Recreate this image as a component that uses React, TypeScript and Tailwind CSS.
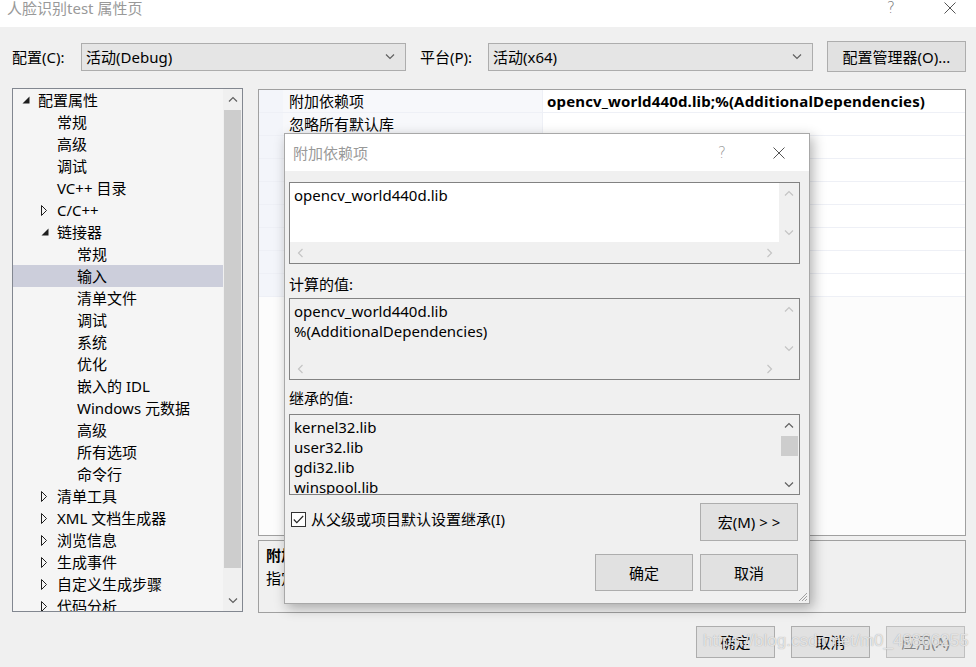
import React from 'react';

type Dir = 'up' | 'down' | 'left' | 'right';

const chevPaths: Record<Dir, string> = {
  up: 'M1 5.5 L5 1.5 L9 5.5',
  down: 'M1 1.5 L5 5.5 L9 1.5',
  left: 'M5.5 1 L1.5 5 L5.5 9',
  right: 'M1.5 1 L5.5 5 L1.5 9',
};

function Chevron({ dir, className }: { dir: Dir; className: string }) {
  const vertical = dir === 'up' || dir === 'down';
  return (
    <svg
      width={vertical ? 10 : 7}
      height={vertical ? 7 : 10}
      viewBox={vertical ? '0 0 10 7' : '0 0 7 10'}
      fill="none"
      strokeWidth="1.2"
      className={className}
    >
      <path d={chevPaths[dir]} />
    </svg>
  );
}

function CloseIcon() {
  return (
    <svg width="12" height="12" viewBox="0 0 12 12" stroke="#555" strokeWidth="1">
      <path d="M0.5 0.5 L11.5 11.5 M11.5 0.5 L0.5 11.5" />
    </svg>
  );
}

function Expanded() {
  return (
    <svg width="8" height="8" viewBox="0 0 8 8">
      <path d="M7.5 0.5 L7.5 7.5 L0.5 7.5 Z" fill="#1e1e1e" />
    </svg>
  );
}

function Collapsed() {
  return (
    <svg width="6" height="11" viewBox="0 0 6 11">
      <path d="M0.5 0.5 L5.5 5.5 L0.5 10.5 Z" fill="none" stroke="#1e1e1e" />
    </svg>
  );
}

interface TreeItem {
  label: string;
  level: 0 | 1 | 2;
  state?: 'open' | 'closed';
  selected?: boolean;
}

const tree: TreeItem[] = [
  { label: '配置属性', level: 0, state: 'open' },
  { label: '常规', level: 1 },
  { label: '高级', level: 1 },
  { label: '调试', level: 1 },
  { label: 'VC++ 目录', level: 1 },
  { label: 'C/C++', level: 1, state: 'closed' },
  { label: '链接器', level: 1, state: 'open' },
  { label: '常规', level: 2 },
  { label: '输入', level: 2, selected: true },
  { label: '清单文件', level: 2 },
  { label: '调试', level: 2 },
  { label: '系统', level: 2 },
  { label: '优化', level: 2 },
  { label: '嵌入的 IDL', level: 2 },
  { label: 'Windows 元数据', level: 2 },
  { label: '高级', level: 2 },
  { label: '所有选项', level: 2 },
  { label: '命令行', level: 2 },
  { label: '清单工具', level: 1, state: 'closed' },
  { label: 'XML 文档生成器', level: 1, state: 'closed' },
  { label: '浏览信息', level: 1, state: 'closed' },
  { label: '生成事件', level: 1, state: 'closed' },
  { label: '自定义生成步骤', level: 1, state: 'closed' },
  { label: '代码分析', level: 1, state: 'closed' },
];

const indent = ['pl-[9px]', 'pl-[28px]', 'pl-[48px]'];

// rows below the second one sit under the dialog, so only their lines show
const gridRows = [
  { name: '附加依赖项', value: 'opencv_world440d.lib;%(AdditionalDependencies)' },
  { name: '忽略所有默认库', value: '' },
  { name: '', value: '' },
  { name: '', value: '' },
  { name: '', value: '' },
  { name: '', value: '' },
  { name: '', value: '' },
  { name: '', value: '' },
  { name: '', value: '' },
];

function Dropdown({ text }: { text: string }) {
  return (
    <div className="w-[325px] h-[28px] bg-[#e5e5e5] border border-[#adadad] flex items-center pl-[4px] pr-[10px]">
      <span className="flex-1">{text}</span>
      <Chevron dir="down" className="stroke-[#606060]" />
    </div>
  );
}

function Button({ children, className }: { children: React.ReactNode; className: string }) {
  return (
    <div className={`bg-[#e1e1e1] border border-[#adadad] flex items-center justify-center ${className}`}>
      {children}
    </div>
  );
}

function ScrollBox({
  lines,
  white,
  hscroll,
  active,
  className,
}: {
  lines: string[];
  white?: boolean;
  hscroll?: boolean;
  active?: boolean;
  className: string;
}) {
  const arrow = active ? 'stroke-[#606060]' : 'stroke-[#c4c4c4]';
  return (
    <div className={`border border-[#828282] flex flex-col overflow-hidden ${white ? 'bg-white' : 'bg-[#f0f0f0]'} ${className}`}>
      <div className="flex flex-1 min-h-0">
        <div className="flex-1 pl-[4px] pt-[2px] leading-[20px] overflow-hidden">
          {lines.map((l, i) => (
            <div key={i} className="h-[20px]">{l}</div>
          ))}
        </div>
        <div className="w-[20px] bg-[#f0f0f0] flex flex-col items-center">
          <div className="h-[20px] flex items-center justify-center">
            <Chevron dir="up" className={arrow} />
          </div>
          {active ? <div className="w-[17px] h-[20px] bg-[#cdcdcd] mt-[1px]" /> : null}
          <div className="flex-1" />
          <div className="h-[20px] flex items-center justify-center">
            <Chevron dir="down" className={arrow} />
          </div>
        </div>
      </div>
      {hscroll ? (
        <div className="h-[21px] bg-[#f0f0f0] flex items-center">
          <div className="w-[20px] flex justify-center">
            <Chevron dir="left" className="stroke-[#c4c4c4]" />
          </div>
          <div className="flex-1" />
          <div className="w-[20px] flex justify-center">
            <Chevron dir="right" className="stroke-[#c4c4c4]" />
          </div>
          <div className="w-[20px]" />
        </div>
      ) : null}
    </div>
  );
}

export default function App() {
  return (
    <div className="relative w-[976px] h-[667px] bg-[#f0f0f0] overflow-hidden text-[15px] leading-[20px] text-black font-['Noto_Sans','Noto_Sans_CJK_SC',sans-serif]">
      {/* window title */}
      <div className="h-[27px] bg-white flex items-start pl-[7px]">
        <span className="text-[#999] leading-[17px]">人脸识别test 属性页</span>
        <div className="ml-auto flex items-start">
          <span className="text-[#777] leading-[17px] font-['DejaVu_Sans',sans-serif] font-light">?</span>
          <div className="ml-[49px] mr-[20px] mt-[2px]">
            <CloseIcon />
          </div>
        </div>
      </div>

      {/* configuration row */}
      <div className="mt-[14px] h-[31px] pl-[12px] flex items-center">
        <span className="w-[69px]">配置(C):</span>
        <Dropdown text="活动(Debug)" />
        <span className="w-[82px] pl-[14px]">平台(P):</span>
        <Dropdown text="活动(x64)" />
        <Button className="ml-[14px] w-[139px] h-[31px]">配置管理器(O)...</Button>
      </div>

      {/* main area */}
      <div className="mt-[16px] flex pl-[12px]">
        {/* tree */}
        <div className="w-[231px] h-[524px] border border-[#828790] bg-[#f5f5f5] flex">
          <div className="flex-1 overflow-hidden">
            {tree.map((t, i) => (
              <div
                key={i}
                className={`h-[22px] flex items-center ${indent[t.level]} ${t.selected ? 'bg-[#cccedb]' : ''}`}
              >
                <div className="w-[16px] flex items-center">
                  {t.state === 'open' ? <Expanded /> : t.state === 'closed' ? <Collapsed /> : null}
                </div>
                <span className="whitespace-nowrap">{t.label}</span>
              </div>
            ))}
          </div>
          <div className="w-[19px] bg-[#f0f0f0] flex flex-col items-center">
            <div className="h-[21px] flex items-center justify-center">
              <Chevron dir="up" className="stroke-[#606060]" />
            </div>
            <div className="w-[17px] h-[458px] bg-[#cdcdcd]" />
            <div className="flex-1" />
            <div className="h-[22px] flex items-center justify-center">
              <Chevron dir="down" className="stroke-[#606060]" />
            </div>
          </div>
        </div>

        {/* property grid + description */}
        <div className="ml-[15px] w-[708px] mt-[1px] flex flex-col">
          <div className="h-[447px] border border-[#a0a0a0] bg-[#fcfcfc]">
            {gridRows.map((r, i) => (
              <div key={i} className="h-[23px] flex border-b border-[#eef0f6]">
                <div className="w-[24px] bg-[#f3f5fa]" />
                <div className="w-[259px] bg-[#f7f8fb] pl-[6px] flex items-center whitespace-nowrap">{r.name}</div>
                <div className="flex-1 bg-white pl-[4px] flex items-center font-bold border-l border-[#eef0f6] whitespace-nowrap tracking-[0.15px]">
                  {r.value}
                </div>
              </div>
            ))}
          </div>
          <div className="mt-[4px] h-[73px] border border-[#a0a0a0] px-[7px] pt-[3px]">
            <div className="h-[22px] font-bold flex items-center">附加依赖项</div>
            <div className="h-[24px] flex items-center">指定要添加到链接命令行的附加项。</div>
          </div>
        </div>
      </div>

      {/* dialog buttons */}
      <div className="mt-[13px] flex justify-end gap-[16px] pr-[11px]">
        <Button className="w-[79px] h-[32px]">确定</Button>
        <Button className="w-[79px] h-[32px]">取消</Button>
        <Button className="w-[79px] h-[32px] bg-[#cccccc] border-[#bfbfbf] text-[#838383]">应用(A)</Button>
      </div>

      {/* watermark */}
      <div className="absolute left-[703px] top-[631px] text-[17px] text-white/70 font-['Liberation_Sans',sans-serif] [text-shadow:0_0_1px_#999]">
        https://blog.csdn.net/m0_49866255
      </div>

      {/* child dialog */}
      <div className="absolute left-[284px] top-[133px] w-[526px] h-[471px] bg-[#f0f0f0] border border-[#a8a8a8] shadow-[3px_4px_12px_rgba(0,0,0,0.3)] flex flex-col">
        <div className="h-[37px] bg-white flex items-center pl-[8px]">
          <span className="text-[#999]">附加依赖项</span>
          <span className="ml-auto text-[#999] font-['DejaVu_Sans',sans-serif] font-light">?</span>
          <div className="ml-[47px] mr-[24px]">
            <CloseIcon />
          </div>
        </div>
        <div className="pl-[4px] pr-[9px] flex flex-col">
          <ScrollBox className="mt-[11px] h-[82px]" white hscroll lines={['opencv_world440d.lib']} />
          <div className="mt-[10px] mb-[4px]">计算的值:</div>
          <ScrollBox className="h-[82px]" hscroll lines={['opencv_world440d.lib', '%(AdditionalDependencies)']} />
          <div className="mt-[8px] mb-[6px]">继承的值:</div>
          <ScrollBox
            className="h-[81px]"
            active
            lines={['kernel32.lib', 'user32.lib', 'gdi32.lib', 'winspool.lib', 'comdlg32.lib']}
          />
          <div className="mt-[8px] flex items-start">
            <div className="mt-[6px] ml-[2px] flex items-center">
              <div className="w-[15px] h-[15px] bg-white border border-[#333] flex items-center justify-center">
                <svg width="11" height="9" viewBox="0 0 11 9" fill="none" stroke="#222" strokeWidth="1.1">
                  <path d="M0.8 4.5 L3.8 7.6 L10.2 1" />
                </svg>
              </div>
              <span className="ml-[5px]">从父级或项目默认设置继承(I)</span>
            </div>
            <Button className="ml-auto mr-[2px] w-[98px] h-[38px]">宏(M) &gt; &gt;</Button>
          </div>
          <div className="mt-[13px] flex justify-end gap-[7px] pr-[2px]">
            <Button className="w-[98px] h-[37px]">确定</Button>
            <Button className="w-[98px] h-[37px]">取消</Button>
          </div>
        </div>
        <div className="mt-auto self-end mr-[1px] mb-[1px]">
          <svg width="11" height="11" viewBox="0 0 11 11" stroke="#a0a0a0" strokeWidth="1">
            <path d="M10 2 L2 10 M10 5 L5 10 M10 8 L8 10" />
          </svg>
        </div>
      </div>
    </div>
  );
}
